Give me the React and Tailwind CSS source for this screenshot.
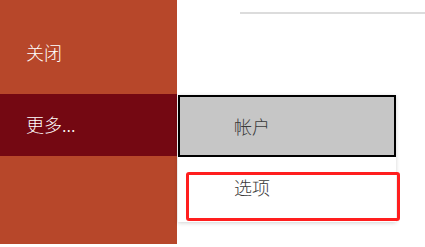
import React from 'react'

const font = { fontFamily: '"Noto Sans CJK SC", "Noto Sans", sans-serif' }

const App = () => {
    return (
        <div className="relative w-[425px] h-[247px] bg-white overflow-hidden" style={font}>
            <div className="flex">
                <div className="w-[177px] h-[244px] bg-[#b7472a] flex flex-col">
                    <div className="h-[94px] pl-[26px] pt-[38px] text-white text-[18px] leading-[28px] font-light">
                        关闭
                    </div>
                    <div className="h-[62px] bg-[#740812] pl-[26px] pb-[2px] flex items-center text-white text-[18px] font-light">
                        更多...
                    </div>
                </div>
                <div className="flex-1 pt-[12px] pl-[63px]">
                    <div className="h-[2px] bg-[#dcdcdc]"></div>
                </div>
            </div>

            {/* dropdown */}
            <div className="absolute left-[178px] top-[95px] w-[218px] h-[127px] bg-white shadow-[0_1px_4px_rgba(0,0,0,0.18)]">
                <div className="h-[62px] bg-[#c6c6c6] border-2 border-black flex items-center pl-[54px] text-[18px] font-light text-[#3a3a3a]">
                    帐户
                </div>
                <div className="h-[62px] pl-[56px] pt-[16px] text-[18px] leading-[28px] font-light text-[#3a3a3a]">
                    选项
                </div>
            </div>
            <div className="absolute left-[186px] top-[172px] w-[214px] h-[49px] border-[3px] border-[#ff1e1e] rounded-[3px]"></div>
        </div>
    )
}

export default App
